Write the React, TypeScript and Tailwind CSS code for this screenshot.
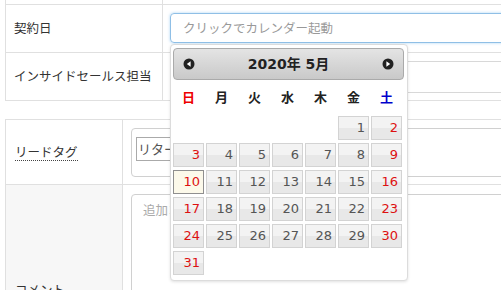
const cells: (number | null)[] = [
  null, null, null, null, null,
  ...Array.from({ length: 31 }, (_, i) => i + 1),
];

const weekdays = ["日", "月", "火", "水", "木", "金", "土"];

function CircleArrow({ dir }: { dir: "left" | "right" }) {
  return (
    <svg width="12" height="12" viewBox="0 0 12 12">
      <circle cx="6" cy="6" r="5.5" fill="#222" />
      {dir === "left" ? (
        <path d="M7.6 3.2 L3.8 6 L7.6 8.8 Z" fill="#fff" />
      ) : (
        <path d="M4.4 3.2 L8.2 6 L4.4 8.8 Z" fill="#fff" />
      )}
    </svg>
  );
}

function Calendar() {
  return (
    <div className="absolute left-[170px] top-[44px] w-[238px] h-[237px] rounded-[4px] border border-[#dcdcdc] bg-white pl-[2px] pr-[3px] pt-[3px] shadow-[0_1px_3px_rgba(0,0,0,0.12)] font-['DejaVu_Sans','Noto_Sans_CJK_JP',sans-serif]">
      {/* header */}
      <div className="flex h-[32px] items-center justify-between rounded-[4px] border border-[#aaa] bg-[linear-gradient(#e4e4e4,#c9c9c9)] px-[9px]">
        <CircleArrow dir="left" />
        <span className="text-[14px] font-bold text-[#222]">2020年 5月</span>
        <CircleArrow dir="right" />
      </div>

      {/* weekdays */}
      <div className="grid h-[36px] w-[229px] grid-cols-[repeat(7,31px)] gap-x-[2px] items-center">
        {weekdays.map((w, i) => (
          <div
            key={w}
            className={
              "text-center text-[13px] font-bold " +
              (i === 0 ? "text-[#e00]" : i === 6 ? "text-[#00c]" : "text-[#222]")
            }
          >
            {w}
          </div>
        ))}
      </div>

      {/* days */}
      <div className="grid w-[229px] grid-cols-[repeat(7,31px)] gap-x-[2px] gap-y-[3px]">
        {cells.map((d, i) => {
          if (d === null) return <div key={"e" + i} className="h-[24px]" />;
          const col = i % 7;
          const weekend = col === 0 || col === 6;
          const today = d === 10;
          return (
            <div
              key={d}
              className={
                "flex h-[24px] items-center justify-end border pr-[3px] text-[13px] " +
                (today
                  ? "border-[#8f8f8f] bg-[#fcf9ea] "
                  : "border-[#d3d3d3] bg-[linear-gradient(#f3f3f3_50%,#e8e8e8_50%)] ") +
                (weekend ? "text-[#dd1111]" : "text-[#555]")
              }
            >
              {d}
            </div>
          );
        })}
      </div>
    </div>
  );
}

export default function App() {
  return (
    <div className="relative h-[290px] w-[501px] overflow-hidden bg-white text-[#333] font-['Noto_Sans_CJK_JP',sans-serif]">
      {/* table 1 */}
      <div className="ml-[5px] w-[560px] border-l border-[#e0e0e0]">
        <div className="flex h-[5px] border-b border-[#e0e0e0]">
          <div className="w-[157px] border-r border-[#e0e0e0]" />
        </div>
        <div className="flex h-[48px] border-b border-[#e0e0e0]">
          <div className="flex w-[157px] items-center border-r border-[#e0e0e0] pl-[8px] text-[12.5px]">
            契約日
          </div>
          <div className="flex-1 pl-[7px] pt-[8px]">
            <div className="flex h-[30px] items-center rounded-[4px] border border-[#8fbfe6] pl-[12px] text-[12.5px] text-[#999] shadow-[0_0_3px_rgba(102,175,233,0.55)]">
              クリックでカレンダー起動
            </div>
          </div>
        </div>
        <div className="flex h-[48px] border-b border-[#e0e0e0]">
          <div className="flex w-[157px] items-center border-r border-[#e0e0e0] pl-[8px] text-[12.5px]">
            インサイドセールス担当
          </div>
          <div className="flex-1 pl-[7px] pt-[8px]">
            <div className="h-[32px] rounded-[4px] border border-[#d8d8d8]" />
          </div>
        </div>
      </div>

      {/* table 2 */}
      <div className="ml-[5px] mt-[18px] w-[560px] border-l border-t border-[#e0e0e0]">
        <div className="flex h-[65px] border-b border-[#e0e0e0]">
          <div className="flex w-[117px] items-center border-r border-[#e0e0e0] pl-[9px] text-[12.5px]">
            <span className="border-b border-dotted border-[#444] leading-[17px]">リードタグ</span>
          </div>
          <div className="flex-1 pl-[8px] pt-[8px]">
            <div className="h-[49px] rounded-[4px] border border-[#d0d0d0] pl-[4px] pt-[8px]">
              <div className="flex h-[24px] w-[160px] items-center border border-[#aaa] pl-[1px] text-[13px] text-[#555]">
                リターゲティング
              </div>
            </div>
          </div>
        </div>
        <div className="flex h-[210px]">
          <div className="flex w-[117px] items-center border-r border-[#e0e0e0] bg-[#f7f7f7] pl-[9px] text-[12.5px]">
            コメント
          </div>
          <div className="flex-1 pl-[8px] pt-[9px]">
            <div className="h-[150px] rounded-[4px] border border-[#d0d0d0] pl-[11px] pt-[6px] text-[12.5px] text-[#aaa]">
              追加コメント
            </div>
          </div>
        </div>
      </div>

      <Calendar />
    </div>
  );
}
